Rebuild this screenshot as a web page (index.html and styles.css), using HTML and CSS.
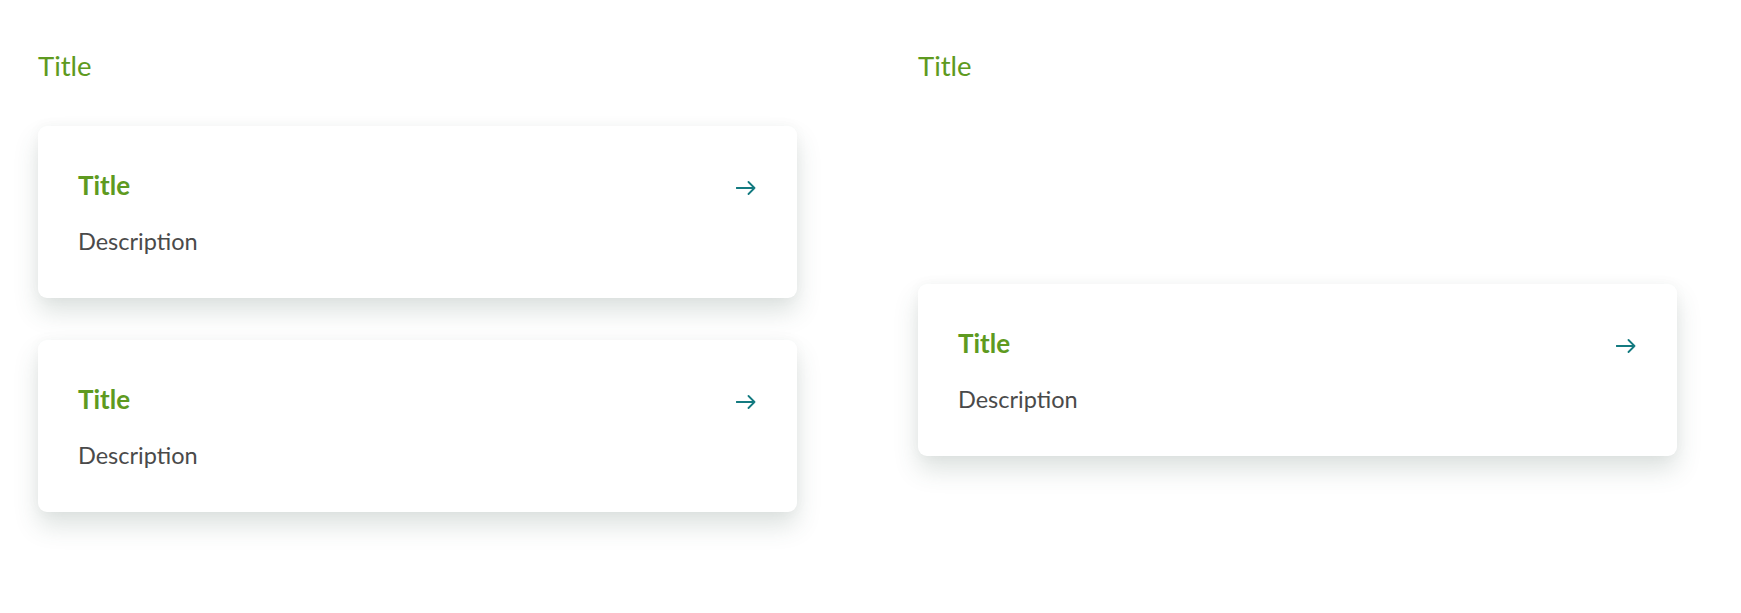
FILE: index.html
```html
<!DOCTYPE html>
<html lang="en">
<head>
<meta charset="utf-8">
<title>Cards</title>
<link rel="stylesheet" href="styles.css">
</head>
<body>
<main class="page">
  <section class="col">
    <h2 class="col-title">Title</h2>
    <div class="stack">
      <a class="card" href="#">
        <div class="card-head">
          <span class="card-title">Title</span>
          <svg class="arrow" viewBox="0 0 20 14" width="20" height="14" aria-hidden="true"><path d="M0.5 7H18.5M12.5 1L18.5 7L12.5 13" fill="none" stroke="currentColor" stroke-width="1.8" stroke-linecap="round" stroke-linejoin="round"/></svg>
        </div>
        <p class="card-desc">Description</p>
      </a>
      <a class="card" href="#">
        <div class="card-head">
          <span class="card-title">Title</span>
          <svg class="arrow" viewBox="0 0 20 14" width="20" height="14" aria-hidden="true"><path d="M0.5 7H18.5M12.5 1L18.5 7L12.5 13" fill="none" stroke="currentColor" stroke-width="1.8" stroke-linecap="round" stroke-linejoin="round"/></svg>
        </div>
        <p class="card-desc">Description</p>
      </a>
    </div>
  </section>
  <section class="col">
    <h2 class="col-title">Title</h2>
    <div class="center">
      <a class="card" href="#">
        <div class="card-head">
          <span class="card-title">Title</span>
          <svg class="arrow" viewBox="0 0 20 14" width="20" height="14" aria-hidden="true"><path d="M0.5 7H18.5M12.5 1L18.5 7L12.5 13" fill="none" stroke="currentColor" stroke-width="1.8" stroke-linecap="round" stroke-linejoin="round"/></svg>
        </div>
        <p class="card-desc">Description</p>
      </a>
    </div>
  </section>
</main>
</body>
</html>
```

FILE: styles.css
```css
html, body {
  margin: 0;
  padding: 0;
  background: #ffffff;
}

body {
  font-family: "Lato", "Open Sans", "Liberation Sans", sans-serif;
}

.page {
  display: grid;
  grid-template-columns: 759px 759px;
  column-gap: 121px;
  padding: 0 0 0 38px;
  min-height: 100vh;
  box-sizing: border-box;
}

.col {
  display: flex;
  flex-direction: column;
}

.col-title {
  margin: 0 0 42px 0;
  padding-top: 48px;
  font-size: 27.5px;
  line-height: 36px;
  font-weight: 400;
  color: #5e9a20;
}

.stack {
  display: flex;
  flex-direction: column;
  gap: 42px;
}

.center {
  flex: 1;
  display: flex;
  flex-direction: column;
  justify-content: center;
}

.card {
  display: block;
  box-sizing: border-box;
  height: 172px;
  padding: 39px 40px 0 40px;
  background: #ffffff;
  border-radius: 9px;
  text-decoration: none;
  box-shadow: 0 14px 24px rgba(60, 90, 80, 0.17), 0 0 14px rgba(0, 0, 0, 0.035);
}

.card-head {
  display: flex;
  align-items: center;
  justify-content: space-between;
  height: 40px;
}

.card-title {
  font-size: 26px;
  font-weight: 700;
  color: #5e9a20;
}

.arrow {
  color: #137a80;
  margin: 6px 1px 0 0;
}

.card-desc {
  margin: 21px 0 0 0;
  font-size: 23.5px;
  line-height: 30px;
  color: #4a4a4a;
}
```
